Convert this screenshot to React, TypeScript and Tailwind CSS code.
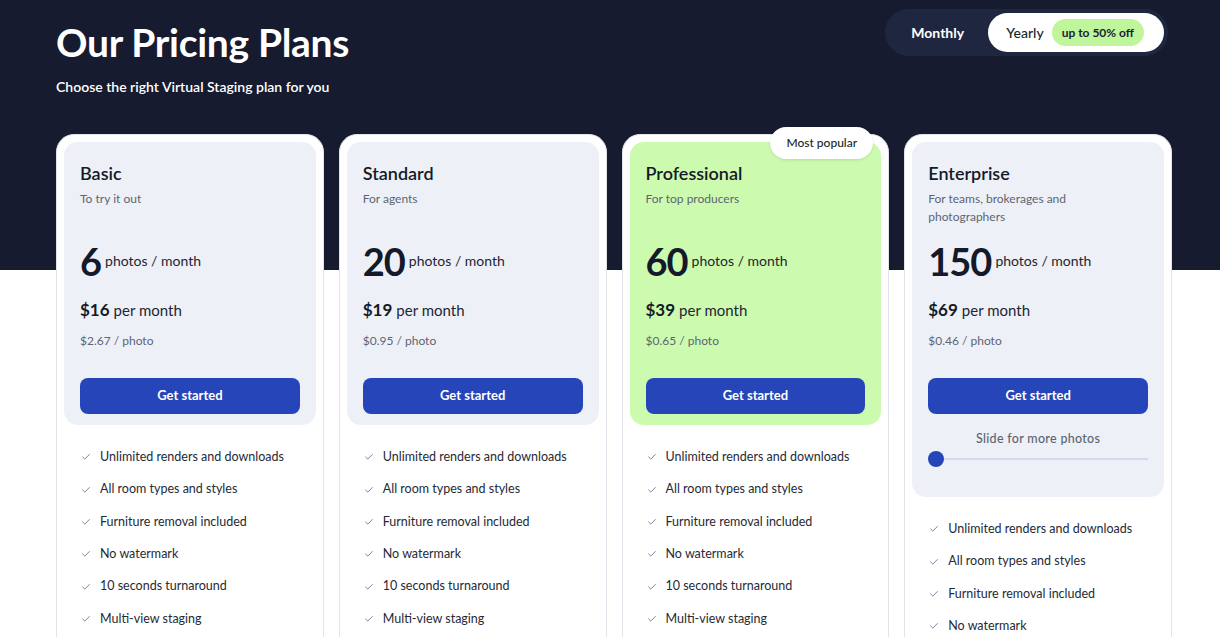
import React from "react";
import { Check } from "lucide-react";

const features = [
  "Unlimited renders and downloads",
  "All room types and styles",
  "Furniture removal included",
  "No watermark",
  "10 seconds turnaround",
  "Multi-view staging",
];

type Plan = {
  name: string;
  sub: string;
  photos: string;
  price: string;
  per: string;
  popular?: boolean;
  slider?: boolean;
};

const plans: Plan[] = [
  { name: "Basic", sub: "To try it out", photos: "6", price: "$16", per: "$2.67 / photo" },
  { name: "Standard", sub: "For agents", photos: "20", price: "$19", per: "$0.95 / photo" },
  { name: "Professional", sub: "For top producers", photos: "60", price: "$39", per: "$0.65 / photo", popular: true },
  { name: "Enterprise", sub: "For teams, brokerages and photographers", photos: "150", price: "$69", per: "$0.46 / photo", slider: true },
];

function Card({ p }: { p: Plan }) {
  const list = p.slider ? features.slice(0, 4) : features;
  return (
    <div className="relative rounded-[18px] border border-[#e1e4ea] bg-white p-[7px] pb-10">
      {p.popular && (
        <div className="absolute right-[15px] top-[-8px] flex h-[32px] w-[103px] items-center justify-center rounded-full bg-white text-[12px] font-medium text-[#1a1f2e] shadow-[0_1px_3px_rgba(0,0,0,0.12)]">
          Most popular
        </div>
      )}
      <div
        className={
          "rounded-[14px] px-4 pt-[19px] pb-[11px] " +
          (p.popular ? "bg-[#ccfbaf]" : "bg-[#edf1f7]")
        }
      >
        <div className="text-[18px] font-semibold leading-[24px] text-[#141a2a]">{p.name}</div>
        <div className="mt-[5px] min-h-[36px] pr-4 text-[12px] leading-[18px] text-[#5d6472]">{p.sub}</div>
        <div className="mt-[13px] flex items-center gap-[4px] leading-[44px]">
          <span className="text-[38px] font-bold tracking-[-1px] text-[#141a2a]">{p.photos}</span>
          <span className="text-[14px] text-[#1f2533]">photos / month</span>
        </div>
        <div className="mt-[15px] flex items-baseline gap-[4px] leading-[24px]">
          <span className="text-[17px] font-bold text-[#141a2a]">{p.price}</span>
          <span className="text-[15px] text-[#1f2533]">per month</span>
        </div>
        <div className="mt-[10px] text-[12px] leading-[18px] text-[#5d6472]">{p.per}</div>
        <button className="mt-[28px] flex h-[36px] w-full items-center justify-center rounded-[8px] bg-[#2545b8] text-[13px] font-bold text-white">
          Get started
        </button>
        {p.slider && (
          <div className="pb-[19px]">
            <div className="mt-[16px] text-center text-[12.5px] font-medium leading-[18px] tracking-[0.3px] text-[#5d6472]">
              Slide for more photos
            </div>
            <div className="mt-[3px] flex items-center">
              <div className="h-[16px] w-[16px] rounded-full bg-[#2545b8]" />
              <div className="h-[2px] flex-1 bg-[#d2d9f1]" />
            </div>
          </div>
        )}
      </div>
      <ul className="mt-[16px] flex flex-col px-[17px]">
        {list.map((f) => (
          <li key={f} className="flex h-[32.4px] items-center gap-[9px] text-[12.5px] text-[#252a36]">
            <Check size={10} strokeWidth={2} className="text-[#5b6a8c]" />
            <span>{f}</span>
          </li>
        ))}
      </ul>
    </div>
  );
}

export default function App() {
  return (
    <div
      className="h-[637px] overflow-hidden bg-[linear-gradient(to_bottom,#161b30_0px,#161b30_270px,#ffffff_270px)]"
      style={{ fontFamily: "Lato, 'Noto Sans', sans-serif" }}
    >
      <div className="flex items-start justify-between pl-[56px] pr-[52px]">
        <div className="pt-[18px]">
          <h1 className="text-[39px] font-bold leading-[48px] tracking-[-0.3px] text-white">Our Pricing Plans</h1>
          <p className="mt-[11px] text-[14px] font-semibold leading-[20px] text-white">
            Choose the right Virtual Staging plan for you
          </p>
        </div>
        <div className="mt-[9px] flex h-[47px] items-center rounded-full bg-[#1f2740] p-[4px]">
          <div className="flex w-[99px] items-center justify-center pr-[2px] text-[14px] font-bold text-white">Monthly</div>
          <div className="flex h-[39px] items-center gap-[8px] rounded-full bg-white pl-[18px] pr-[20px]">
            <span className="text-[14px] font-medium text-[#1a1f2e]">Yearly</span>
            <span className="flex h-[27px] items-center rounded-full bg-[#bff59b] px-[10px] text-[12px] font-bold text-[#1a1f2e]">
              up to 50% off
            </span>
          </div>
        </div>
      </div>
      <div className="mt-[37px] grid w-[1116px] grid-cols-4 gap-[15px] pl-[56px] box-content">
        {plans.map((p) => (
          <Card key={p.name} p={p} />
        ))}
      </div>
    </div>
  );
}
